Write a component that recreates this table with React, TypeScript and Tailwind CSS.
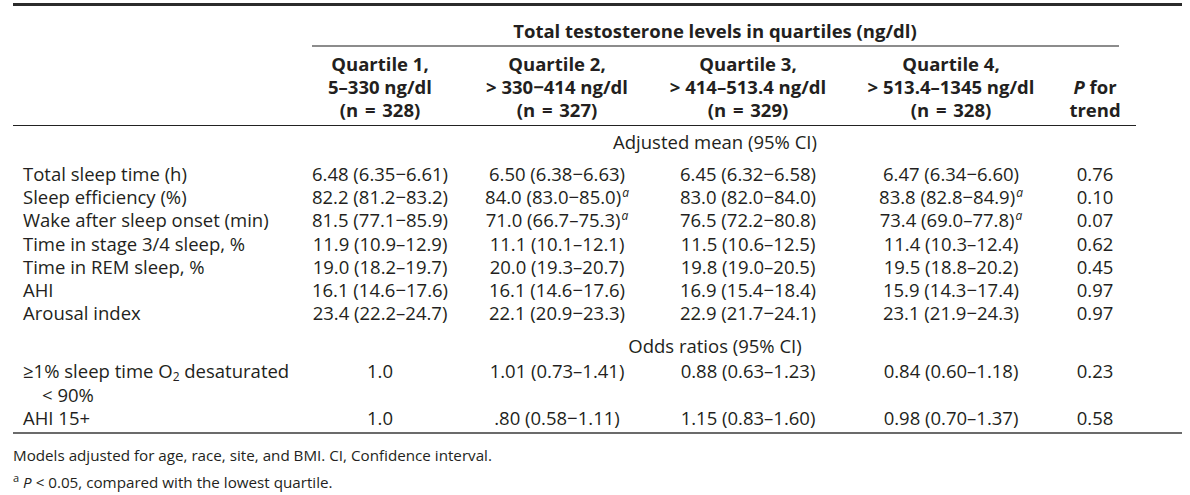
import React from "react";

const W = ["w-[281px]", "w-[172px]", "w-[182px]", "w-[200px]", "w-[206px]", "w-[82px]"];

type Cell = React.ReactNode;

const A = () => <sup className="italic text-[12px] relative -top-[7px] align-baseline ml-[1px]">a</sup>;

const rows: Cell[][] = [
  ["Total sleep time (h)", "6.48 (6.35−6.61)", "6.50 (6.38−6.63)", "6.45 (6.32−6.58)", "6.47 (6.34−6.60)", "0.76"],
  ["Sleep efficiency (%)", "82.2 (81.2−83.2)", <>84.0 (83.0−85.0)<A /></>, "83.0 (82.0−84.0)", <>83.8 (82.8−84.9)<A /></>, "0.10"],
  ["Wake after sleep onset (min)", "81.5 (77.1−85.9)", <>71.0 (66.7–75.3)<A /></>, "76.5 (72.2−80.8)", <>73.4 (69.0–77.8)<A /></>, "0.07"],
  ["Time in stage 3/4 sleep, %", "11.9 (10.9–12.9)", "11.1 (10.1–12.1)", "11.5 (10.6–12.5)", "11.4 (10.3–12.4)", "0.62"],
  ["Time in REM sleep, %", "19.0 (18.2–19.7)", "20.0 (19.3–20.7)", "19.8 (19.0–20.5)", "19.5 (18.8–20.2)", "0.45"],
  ["AHI", "16.1 (14.6−17.6)", "16.1 (14.6−17.6)", "16.9 (15.4−18.4)", "15.9 (14.3−17.4)", "0.97"],
  ["Arousal index", "23.4 (22.2–24.7)", "22.1 (20.9−23.3)", "22.9 (21.7−24.1)", "23.1 (21.9−24.3)", "0.97"],
];

function Row({ cells, className = "" }: { cells: Cell[]; className?: string }) {
  return (
    <div className={"flex leading-[23.2px] " + className}>
      {cells.map((c, i) => (
        <div
          key={i}
          className={
            W[i] +
            " shrink-0 whitespace-nowrap " +
            (i === 0 ? "pl-[10px] text-left" : "text-center")
          }
        >
          {c}
        </div>
      ))}
    </div>
  );
}

function SpanText({ children }: { children: React.ReactNode }) {
  return (
    <div className="flex leading-[23px]">
      <div className={W[0] + " shrink-0"} />
      <div className="w-[842px] shrink-0 text-center whitespace-nowrap">{children}</div>
    </div>
  );
}

const N = ({ n }: { n: string }) => (
  <div>
    (n <span className="mx-[2px]">=</span> {n})
  </div>
);

export default function App() {
  return (
    <div
      className="w-[1190px] h-[495px] bg-white text-[#231f20] text-[18.5px] overflow-hidden"
      style={{ fontFamily: "'Open Sans', 'Noto Sans', sans-serif" }}
    >
      <div className="ml-[13px] w-[1169px] pt-[3px]">
        <div className="h-[3px] bg-[#2b2b2b]" />

        {/* Group header */}
        <div className="pt-[13px] font-bold">
          <SpanText>Total testosterone levels in quartiles (ng/dl)</SpanText>
        </div>
        <div className="flex mt-[3px]">
          <div className={W[0] + " shrink-0"} />
          <div className="w-[842px] shrink-0 pl-[18px] pr-[17px]">
            <div className="h-[2px] bg-[#8c8c8c]" />
          </div>
        </div>

        {/* Column headers */}
        <div className="flex font-bold leading-[23px] mt-[5px]">
          <div className={W[0] + " shrink-0"} />
          <div className={W[1] + " shrink-0 text-center whitespace-nowrap"}>
            <div>Quartile 1,</div>
            <div>5–330 ng/dl</div>
            <N n="328" />
          </div>
          <div className={W[2] + " shrink-0 text-center whitespace-nowrap"}>
            <div>Quartile 2,</div>
            <div>&gt; 330−414 ng/dl</div>
            <N n="327" />
          </div>
          <div className={W[3] + " shrink-0 text-center whitespace-nowrap"}>
            <div>Quartile 3,</div>
            <div>&gt; 414–513.4 ng/dl</div>
            <N n="329" />
          </div>
          <div className={W[4] + " shrink-0 text-center whitespace-nowrap"}>
            <div>Quartile 4,</div>
            <div>&gt; 513.4–1345 ng/dl</div>
            <N n="328" />
          </div>
          <div className={W[5] + " shrink-0 text-center whitespace-nowrap pt-[23px]"}>
            <div>
              <span className="italic">P</span> for
            </div>
            <div>trend</div>
          </div>
        </div>
        <div className="w-[1123px] h-px bg-[#222] mt-[4px]" />

        <div className="mt-[4px]">
          <SpanText>Adjusted mean (95% CI)</SpanText>
        </div>

        <div className="mt-[9px]">
          {rows.map((r, i) => (
            <Row key={i} cells={r} />
          ))}
        </div>

        <div className="mt-[10px]">
          <SpanText>Odds ratios (95% CI)</SpanText>
        </div>

        <div className="mt-[2px]">
          <div className="flex leading-[23.2px]">
            <div className={W[0] + " shrink-0 pl-[10px] whitespace-nowrap"}>
              <div>
                ≥1% sleep time O<sub className="text-[12px]">2</sub> desaturated
              </div>
              <div className="pl-[19px]">&lt; 90%</div>
            </div>
            <div className={W[1] + " shrink-0 text-center"}>1.0</div>
            <div className={W[2] + " shrink-0 text-center whitespace-nowrap"}>1.01 (0.73–1.41)</div>
            <div className={W[3] + " shrink-0 text-center whitespace-nowrap"}>0.88 (0.63–1.23)</div>
            <div className={W[4] + " shrink-0 text-center whitespace-nowrap"}>0.84 (0.60–1.18)</div>
            <div className={W[5] + " shrink-0 text-center"}>0.23</div>
          </div>
          <Row cells={["AHI 15+", "1.0", ".80 (0.58−1.11)", "1.15 (0.83–1.60)", "0.98 (0.70–1.37)", "0.58"]} />
        </div>

        <div className="h-[2px] bg-[#6b6b6b] mt-[3px]" />

        <div className="text-[15.2px] leading-[23px] mt-[10px] whitespace-nowrap">
          Models adjusted for age, race, site, and BMI. CI, Confidence interval.
        </div>
        <div className="text-[15.2px] leading-[23px] mt-[4px] whitespace-nowrap">
          <sup className="text-[11px] relative -top-[6px] align-baseline">a</sup>{" "}
          <span className="italic">P</span> &lt; 0.05, compared with the lowest quartile.
        </div>
      </div>
    </div>
  );
}
